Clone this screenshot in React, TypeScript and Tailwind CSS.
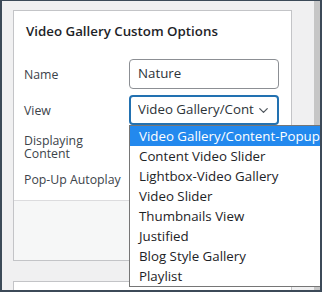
import React from 'react';
import { ChevronDown } from 'lucide-react';

const options = [
  'Video Gallery/Content-Popup',
  'Content Video Slider',
  'Lightbox-Video Gallery',
  'Video Slider',
  'Thumbnails View',
  'Justified',
  'Blog Style Gallery',
  'Playlist',
];

export default function App() {
  return (
    <div
      className="relative w-[322px] h-[292px] overflow-hidden bg-[#f0f0f1] border-t border-l-2 border-r-2 border-b-2 border-[#3c4a58] flex"
      style={{ fontFamily: '"Open Sans", "Noto Sans", sans-serif' }}
    >
      <div className="flex-1">
        {/* main options card */}
        <div className="mt-[9px] ml-[11px] w-[279px] border border-[#c3c4c7] bg-white">
          <div className="pl-[12px] pt-[10px] h-[20px] box-content text-[13.3px] leading-[20px] font-semibold text-[#1d2327]">
            Video Gallery Custom Options
          </div>

          <div className="mt-[18px] pl-[10px] text-[12.3px] text-[#3c434a]">
            <div className="grid grid-cols-[105px_150px] items-center h-[30px]">
              <span className="pt-[3px]">Name</span>
              <div className="h-[30px] rounded-[4px] border border-[#8c8f94] px-[8px] flex items-center text-[13.3px] text-[#2c3338]">
                Nature
              </div>
            </div>
            <div className="mt-[6px] grid grid-cols-[105px_150px] items-center h-[30px]">
              <span className="pt-[2px]">View</span>
              <div className="h-[30px] rounded-[4px] border-2 border-[#2271b1] pl-[7px] pr-[6px] flex items-center text-[13.3px] text-[#2c3338]">
                <span className="w-[116px] overflow-hidden whitespace-nowrap">Video Gallery/Content-Popup</span>
                <span className="flex-1" />
                <ChevronDown size={15} strokeWidth={2} className="text-[#50575e] shrink-0" />
              </div>
            </div>
            <div className="mt-[6px] h-[32px] flex items-center leading-[13px]">
              <span className="w-[105px]">Displaying<br />Content</span>
            </div>
            <div className="mt-[4px] h-[26px] flex items-center">
              <span>Pop-Up Autoplay</span>
            </div>
          </div>

          <div className="mt-[7px] h-[60px] border-t border-[#dcdcde] bg-[#f6f7f7]" />
        </div>

        {/* next card */}
        <div className="mt-[20px] ml-[11px] w-[279px] h-[40px] border border-[#c3c4c7] bg-white" />
      </div>

      {/* scrollbar strip */}
      <div className="w-[6px] bg-[#c6c6c6]" />

      {/* open select list */}
      <div className="absolute left-[127px] top-[124px] w-[193px] border border-[#767676] bg-white text-[13.3px] text-[#1d2327]">
        {options.map((o, i) => (
          <div
            key={o}
            className={`h-[20px] leading-[20px] pl-[9px] whitespace-nowrap ${i === 0 ? 'bg-[#2389ee] text-white' : ''}`}
          >
            {o}
          </div>
        ))}
      </div>
    </div>
  );
}
